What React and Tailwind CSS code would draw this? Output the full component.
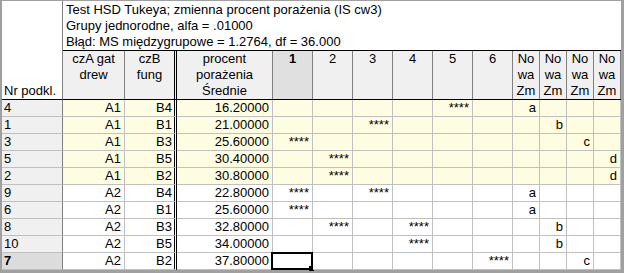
import React from 'react'

// column widths for header and body cells (rowheader excluded)
const COLS = [
  'w-[62px] border-r',
  'w-[52px] border-r-[3px] border-double border-r-black',
  'w-[96px] border-r',
  'w-[40px] border-r',
  'w-[40px] border-r',
  'w-[40px] border-r',
  'w-[40px] border-r',
  'w-[40px] border-r',
  'w-[40px] border-r',
  'w-[27px] border-r',
  'w-[27px] border-r',
  'w-[27px] border-r',
  'w-[27px] border-r',
]

const HEAD = [
  ['czA gat', 'drew'],
  ['czB', 'fung'],
  ['procent', 'porażenia', 'Średnie'],
  ['1'],
  ['2'],
  ['3'],
  ['4'],
  ['5'],
  ['6'],
  ['No', 'wa', 'Zm'],
  ['No', 'wa', 'Zm'],
  ['No', 'wa', 'Zm'],
  ['No', 'wa', 'Zm'],
]

const S = '****'

const rows = [
  { nr: '4', a: 'A1', b: 'B4', v: '16.20000', stars: [5], grp: [0, 'a'], hl: true },
  { nr: '1', a: 'A1', b: 'B1', v: '21.00000', stars: [3], grp: [1, 'b'], hl: true },
  { nr: '3', a: 'A1', b: 'B3', v: '25.60000', stars: [1], grp: [2, 'c'], hl: true },
  { nr: '5', a: 'A1', b: 'B5', v: '30.40000', stars: [2], grp: [3, 'd'], hl: true },
  { nr: '2', a: 'A1', b: 'B2', v: '30.80000', stars: [2], grp: [3, 'd'], hl: true },
  { nr: '9', a: 'A2', b: 'B4', v: '22.80000', stars: [1, 3], grp: [0, 'a'] },
  { nr: '6', a: 'A2', b: 'B1', v: '25.60000', stars: [1], grp: [0, 'a'] },
  { nr: '8', a: 'A2', b: 'B3', v: '32.80000', stars: [2, 4], grp: [1, 'b'] },
  { nr: '10', a: 'A2', b: 'B5', v: '34.00000', stars: [4], grp: [1, 'b'] },
  { nr: '7', a: 'A2', b: 'B2', v: '37.80000', stars: [6], grp: [2, 'c'], active: true },
]

function DataRow({ r }) {
  const cells = [r.a, r.b, r.v]
  for (let i = 1; i <= 6; i++) cells.push(r.stars.includes(i) ? S : '')
  for (let i = 0; i < 4; i++) cells.push(r.grp[0] === i ? r.grp[1] : '')

  return (
    <div className="flex h-[17px]">
      <div
        className={`w-[61px] shrink-0 border-r border-r-[#808080] border-b border-b-[#c0c0c0] pl-[2px] ${
          r.active ? 'bg-[#dcdcdc] font-bold' : 'bg-[#f0f0f0]'
        }`}
      >
        {r.nr}
      </div>
      {cells.map((c, i) => (
        <div
          key={i}
          className={`${COLS[i]} relative shrink-0 border-b border-[#c0c0c0] text-right pr-[2px] ${
            i === 1 ? '' : 'pr-[3px]'
          } ${r.hl ? 'bg-[#fffde1]' : 'bg-white'}`}
        >
          {c}
          {r.active && i === 3 && (
            <>
              <div className="absolute left-[-2px] top-[-1px] w-[42px] h-[18px] border-2 border-black" />
              <div className="absolute left-[36px] top-[13px] w-[5px] h-[5px] bg-black" />
            </>
          )}
        </div>
      ))}
    </div>
  )
}

export default function App() {
  return (
    <div className="w-[624px] h-[273px] overflow-hidden bg-[#a0a0a0] pl-[2px] pt-px font-['Liberation_Sans',Arial,sans-serif] text-[13px] leading-4 text-black">
      <div className="w-[619px] bg-white">
        <div className="flex">
          <div className="w-[61px] h-[99px] shrink-0 flex items-end pl-[2px] border-r border-r-[#808080] border-b border-b-black">
            Nr podkl.
          </div>
          <div className="flex-1">
            <div className="h-[49px] pl-[3px] pt-px">
              <div>Test HSD Tukeya; zmienna procent porażenia (IS cw3)</div>
              <div>Grupy jednorodne, alfa = .01000</div>
              <div>Błąd: MS międzygrupowe = 1.2764, df = 36.000</div>
            </div>
            <div className="flex h-[50px] border-y border-black">
              {HEAD.map((h, i) => (
                <div
                  key={i}
                  className={`${COLS[i]} shrink-0 border-[#808080] text-center ${
                    i === 3 ? 'bg-[#e0e0e0] font-bold' : 'bg-[#f0f0f0]'
                  }`}
                >
                  {h.map((t, j) => (
                    <div key={j}>{t}</div>
                  ))}
                </div>
              ))}
            </div>
          </div>
        </div>
        {rows.map((r) => (
          <DataRow key={r.nr} r={r} />
        ))}
      </div>
    </div>
  )
}
